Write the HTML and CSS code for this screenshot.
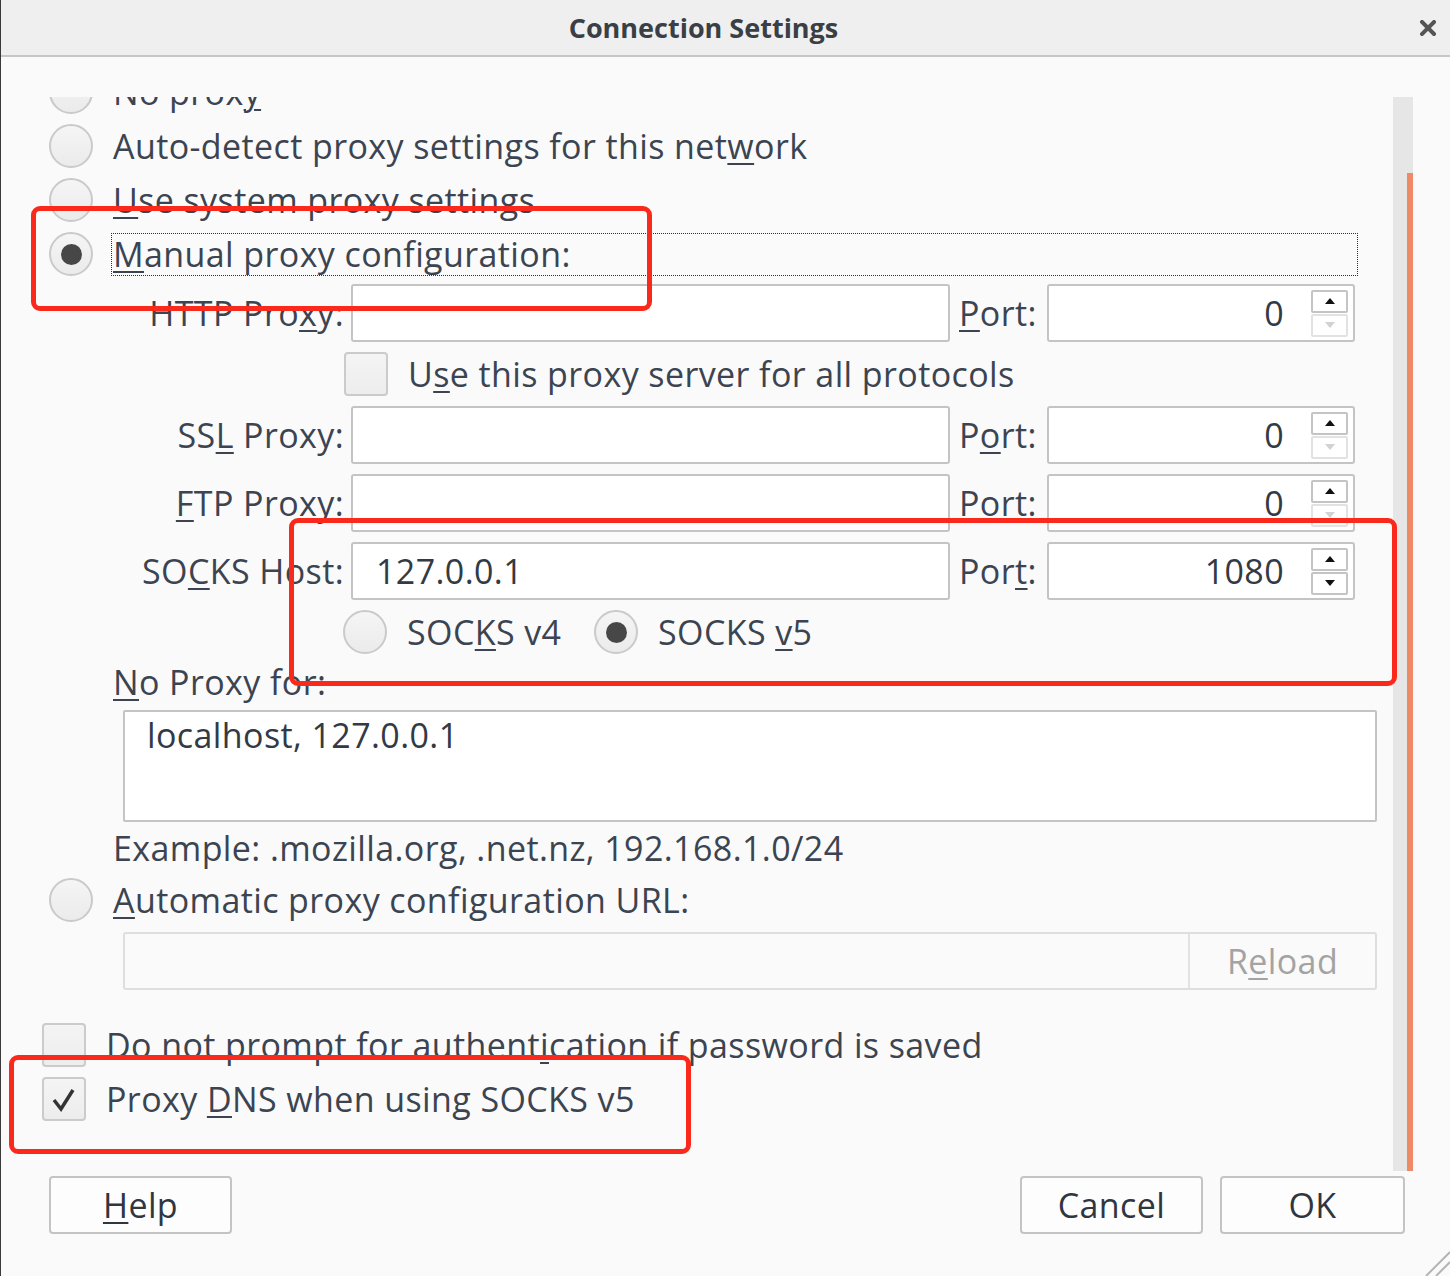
FILE: index.html
```html
<!DOCTYPE html>
<html lang="en">
<head>
<meta charset="utf-8">
<title>Connection Settings</title>
<link rel="stylesheet" href="styles.css">
</head>
<body>
<div class="window">
  <header class="titlebar">
    <span class="title">Connection Settings</span>
    <span class="close">
      <svg width="16" height="16" viewBox="0 0 16 16"><path d="M2 2 L14 14 M14 2 L2 14" stroke="#555" stroke-width="4" stroke-linecap="square"/></svg>
    </span>
  </header>

  <main class="body">
    <div class="scroll">
      <div class="viewport">
        <div class="content">
          <div class="radio-row"><span class="radio"></span><span class="txt">No prox<u>y</u></span></div>
          <div class="radio-row"><span class="radio"></span><span class="txt">Auto-detect proxy settings for this net<u>w</u>ork</span></div>
          <div class="radio-row"><span class="radio"></span><span class="txt"><u>U</u>se system proxy settings</span></div>
          <div class="radio-row"><span class="radio checked"></span><span class="txt focus"><u>M</u>anual proxy configuration:</span></div>

          <div class="field-row first">
            <span class="flabel">HTTP Pro<u>x</u>y:</span>
            <span class="input host"></span>
            <span class="plabel"><u>P</u>ort:</span>
            <span class="spin"><span class="spin-val">0</span><span class="spin-btns"><span class="sbtn"><i class="arr up"></i></span><span class="sbtn off"><i class="arr down"></i></span></span></span>
          </div>

          <div class="check-row indent"><span class="check"></span><span class="txt">U<u>s</u>e this proxy server for all protocols</span></div>

          <div class="field-row">
            <span class="flabel">SS<u>L</u> Proxy:</span>
            <span class="input host"></span>
            <span class="plabel">P<u>o</u>rt:</span>
            <span class="spin"><span class="spin-val">0</span><span class="spin-btns"><span class="sbtn"><i class="arr up"></i></span><span class="sbtn off"><i class="arr down"></i></span></span></span>
          </div>

          <div class="field-row gap">
            <span class="flabel"><u>F</u>TP Proxy:</span>
            <span class="input host"></span>
            <span class="plabel">Po<u>r</u>t:</span>
            <span class="spin"><span class="spin-val">0</span><span class="spin-btns"><span class="sbtn"><i class="arr up"></i></span><span class="sbtn off"><i class="arr down"></i></span></span></span>
          </div>

          <div class="field-row gap">
            <span class="flabel">SO<u>C</u>KS Host:</span>
            <span class="input host">127.0.0.1</span>
            <span class="plabel">Por<u>t</u>:</span>
            <span class="spin"><span class="spin-val">1080</span><span class="spin-btns"><span class="sbtn"><i class="arr up"></i></span><span class="sbtn"><i class="arr down"></i></span></span></span>
          </div>

          <div class="ver-row">
            <span class="ver-opt"><span class="radio"></span><span class="txt">SOC<u>K</u>S v4</span></span>
            <span class="ver-opt"><span class="radio checked"></span><span class="txt">SOCKS <u>v</u>5</span></span>
          </div>

          <div class="label-row noproxy"><span class="txt"><u>N</u>o Proxy for:</span></div>
          <div class="textarea">localhost, 127.0.0.1</div>
          <div class="label-row example"><span class="txt">Example: .mozilla.org, .net.nz, 192.168.1.0/24</span></div>

          <div class="radio-row auto"><span class="radio"></span><span class="txt"><u>A</u>utomatic proxy configuration URL:</span></div>
          <div class="url-row"><span class="url-input"></span><span class="reload">R<u>e</u>load</span></div>

          <div class="check-row bottom first-check"><span class="check"></span><span class="txt">Do not prompt for authent<u>i</u>cation if password is saved</span></div>
          <div class="check-row bottom"><span class="check on"><svg width="40" height="40" viewBox="0 0 40 40"><path d="M10 21 L17 30 L29 11" fill="none" stroke="#333" stroke-width="3.5" stroke-linejoin="miter"/></svg></span><span class="txt">Proxy <u>D</u>NS when using SOCKS v5</span></div>
        </div>
      </div>
      <div class="scrollbar"><div class="thumb"></div></div>
    </div>

    <div class="buttons">
      <span class="btn help"><u>H</u>elp</span>
      <span class="spacer"></span>
      <span class="btn cancel">Cancel</span>
      <span class="btn ok">OK</span>
    </div>
  </main>

  <div class="annot a1"></div>
  <div class="annot a2"></div>
  <div class="annot a3"></div>

  <svg class="grip" width="28" height="28" viewBox="0 0 28 28"><path d="M4 28 L28 4 M14 28 L28 14" stroke="#b4b4b4" stroke-width="2"/></svg>
</div>
</body>
</html>
```

FILE: styles.css
```css
html, body {
  margin: 0;
  padding: 0;
  background: #fafafa;
}

.window {
  position: relative;
  width: 1450px;
  height: 1276px;
  box-sizing: border-box;
  border-left: 1px solid #3a3a3a;
  background: #fafafa;
  font-family: "Open Sans", "Noto Sans", "DejaVu Sans", sans-serif;
  font-size: 34px;
  letter-spacing: 0.4px;
  color: #3b4450;
  overflow: hidden;
}

u {
  text-decoration-thickness: 2px;
  text-underline-offset: 4px;
}

/* title bar */
.titlebar {
  height: 55px;
  display: flex;
  align-items: center;
  background: #efefef;
  border-bottom: 2px solid #c6c6c6;
}
.title {
  flex: 1;
  text-align: center;
  font-weight: 700;
  font-size: 27px;
  letter-spacing: 0;
  color: #3a3f46;
}
.close {
  width: 44px;
  display: flex;
  justify-content: center;
  align-items: center;
}

/* body */
.body {
  padding-top: 40px;
}
.scroll {
  display: flex;
  height: 1074px;
  margin-right: 37px;
}
.viewport {
  flex: 1;
  overflow: hidden;
}
.content {
  margin-top: -32px;
}
.scrollbar {
  width: 20px;
  background: #e6e6e6;
  display: flex;
  flex-direction: column;
  align-items: flex-end;
  padding-top: 76px;
  box-sizing: border-box;
}
.thumb {
  flex: 1;
  width: 6px;
  background: #ee8a66;
}

.txt {
  white-space: nowrap;
}

/* radio rows */
.radio-row {
  display: flex;
  align-items: center;
  height: 54px;
  padding-left: 48px;
  gap: 20px;
}
.radio-row.auto {
  height: 52px;
}
.radio {
  position: relative;
  width: 44px;
  height: 44px;
  flex: none;
  box-sizing: border-box;
  border-radius: 50%;
  border: 2px solid #cacaca;
  background: linear-gradient(#f5f5f5, #ebebeb);
}
.radio.checked::after {
  content: "";
  position: absolute;
  left: 50%;
  top: 50%;
  width: 21px;
  height: 21px;
  margin: -10.5px 0 0 -10.5px;
  border-radius: 50%;
  background: #474747;
}
.focus {
  margin-left: -2px;
  width: 1247px;
  height: 43px;
  box-sizing: border-box;
  border: 1px dotted #2e2e2e;
  padding-left: 1px;
  display: flex;
  align-items: center;
}

/* field rows */
.field-row {
  display: flex;
  align-items: center;
  height: 58px;
  padding-left: 48px;
}
.field-row.first {
  margin-top: 3px;
}
.field-row.gap {
  margin-top: 10px;
}
.flabel {
  width: 295px;
  text-align: right;
  white-space: nowrap;
  margin-right: 7px;
}
.input {
  height: 58px;
  box-sizing: border-box;
  border: 2px solid #c4c4c4;
  border-radius: 3px;
  background: #fff;
  display: flex;
  align-items: center;
  padding: 0 23px;
  color: #323a44;
}
.input.host {
  width: 599px;
}
.plabel {
  width: 80px;
  margin-left: 9px;
  margin-right: 8px;
  white-space: nowrap;
}
.spin {
  width: 308px;
  height: 58px;
  box-sizing: border-box;
  border: 2px solid #c4c4c4;
  border-radius: 3px;
  background: #fff;
  display: flex;
  align-items: center;
  padding-right: 5px;
  color: #323a44;
}
.spin-val {
  flex: 1;
  text-align: right;
  padding-right: 27px;
}
.spin-btns {
  display: flex;
  flex-direction: column;
  gap: 1px;
  width: 37px;
}
.sbtn {
  height: 23px;
  box-sizing: border-box;
  border: 2px solid #c4c4c4;
  border-radius: 2px;
  background: #fff;
  display: flex;
  align-items: center;
  justify-content: center;
}
.sbtn.off {
  border-color: #e2e2e2;
}
.arr {
  width: 0;
  height: 0;
  border-left: 5px solid transparent;
  border-right: 5px solid transparent;
}
.arr.up {
  border-bottom: 6px solid #111;
}
.arr.down {
  border-top: 6px solid #111;
}
.sbtn.off .arr.down {
  border-top-color: #d2d2d2;
}

/* checkbox rows */
.check-row {
  display: flex;
  align-items: center;
  gap: 20px;
}
.check-row.indent {
  height: 64px;
  padding-left: 343px;
}
.check-row.bottom {
  height: 54px;
  padding-left: 41px;
}
.check-row.first-check {
  margin-top: 28px;
}
.check {
  width: 44px;
  height: 44px;
  flex: none;
  box-sizing: border-box;
  border: 2px solid #cbcbcb;
  border-radius: 4px;
  background: linear-gradient(#f4f4f4, #ededed);
  display: flex;
  align-items: center;
  justify-content: center;
}

/* socks version */
.ver-row {
  display: flex;
  align-items: center;
  height: 64px;
  padding-left: 342px;
}
.ver-opt {
  display: flex;
  align-items: center;
  gap: 20px;
}
.ver-opt:first-child {
  width: 251px;
}

/* labels and text area */
.label-row {
  display: flex;
  align-items: center;
  padding-left: 112px;
}
.label-row.noproxy {
  height: 36px;
  margin-bottom: 10px;
}
.label-row.example {
  height: 52px;
}
.textarea {
  margin-left: 122px;
  width: 1254px;
  height: 112px;
  box-sizing: border-box;
  border: 2px solid #c4c4c4;
  border-radius: 2px;
  background: #fff;
  padding: 0 22px;
  line-height: 46px;
  color: #323a44;
}

/* url row */
.url-row {
  margin-left: 122px;
  margin-top: 6px;
  width: 1254px;
  height: 58px;
  box-sizing: border-box;
  border: 2px solid #dedede;
  border-radius: 3px;
  background: #fafafa;
  display: flex;
}
.url-input {
  flex: 1;
}
.reload {
  width: 185px;
  border-left: 2px solid #e2e2e2;
  display: flex;
  align-items: center;
  justify-content: center;
  color: #a3a3a3;
}

/* buttons */
.buttons {
  display: flex;
  align-items: center;
  margin-top: 5px;
  padding-left: 48px;
  padding-right: 45px;
  gap: 17px;
}
.spacer {
  flex: 1;
}
.btn {
  height: 58px;
  box-sizing: border-box;
  border: 2px solid #c4c4c4;
  border-radius: 4px;
  background: #fdfdfd;
  display: flex;
  align-items: center;
  justify-content: center;
  color: #2f3640;
}
.btn.help { width: 183px; }
.btn.cancel { width: 183px; }
.btn.ok { width: 185px; }

/* red annotation boxes drawn over the screenshot */
.annot {
  position: absolute;
  box-sizing: border-box;
  border: 5px solid #f92a1c;
  border-radius: 9px;
  pointer-events: none;
}
.a1 { left: 30px; top: 206px; width: 621px; height: 105px; }
.a2 { left: 288px; top: 518px; width: 1108px; height: 168px; }
.a3 { left: 8px; top: 1055px; width: 682px; height: 99px; }

.grip {
  position: absolute;
  right: 0;
  bottom: 0;
}
```
